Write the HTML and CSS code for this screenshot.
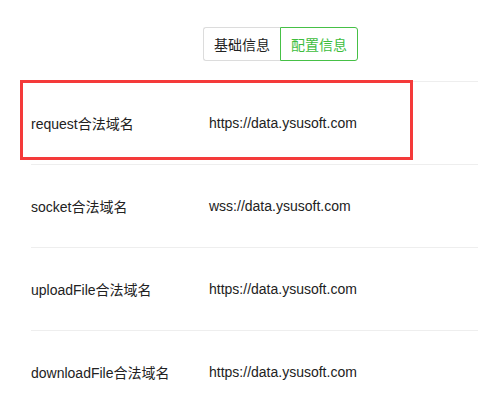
FILE: index.html
```html
<!DOCTYPE html>
<html lang="zh">
<head>
<meta charset="utf-8">
<link rel="stylesheet" href="styles.css">
</head>
<body>
<div class="page">
  <div class="tabs">
    <div class="seg">
      <span class="seg-btn">基础信息</span>
      <span class="seg-btn active">配置信息</span>
    </div>
  </div>
  <div class="list">
    <div class="row"><span class="label">request合法域名</span><span class="value">https://data.ysusoft.com</span></div>
    <div class="row"><span class="label">socket合法域名</span><span class="value">wss://data.ysusoft.com</span></div>
    <div class="row"><span class="label">uploadFile合法域名</span><span class="value">https://data.ysusoft.com</span></div>
    <div class="row"><span class="label">downloadFile合法域名</span><span class="value">https://data.ysusoft.com</span></div>
  </div>
  <div class="highlight"></div>
</div>
</body>
</html>
```

FILE: styles.css
```css
html, body {
  margin: 0;
  padding: 0;
  background: #fff;
}
.page {
  position: relative;
  width: 478px;
  height: 396px;
  overflow: hidden;
  font-family: "Liberation Sans", Arial, "Noto Sans CJK SC", sans-serif;
  font-size: 14px;
  color: #222;
}
.tabs {
  height: 81px;
  padding-left: 203px;
  padding-top: 27px;
  box-sizing: border-box;
}
.seg {
  display: flex;
  height: 34px;
}
.seg-btn {
  display: flex;
  align-items: center;
  justify-content: center;
  box-sizing: border-box;
  height: 34px;
  padding: 0 10px;
  border: 1px solid #dcdcdc;
  border-right: none;
  border-radius: 3px 0 0 3px;
  width: 77px;
  color: #222;
}
.seg-btn.active {
  border: 1px solid #46c046;
  border-radius: 0 3px 3px 0;
  color: #3dbd3d;
  width: 78px;
}
.list {
  padding-left: 31px;
}
.row {
  display: flex;
  align-items: center;
  height: 83px;
  box-sizing: border-box;
  border-top: 1px solid #eeeeee;
}
.label {
  width: 178px;
  flex: none;
}
.value {
  flex: none;
}
.highlight {
  position: absolute;
  left: 20px;
  top: 80px;
  width: 393px;
  height: 80px;
  box-sizing: border-box;
  border: 3px solid #f43a3a;
}
```
